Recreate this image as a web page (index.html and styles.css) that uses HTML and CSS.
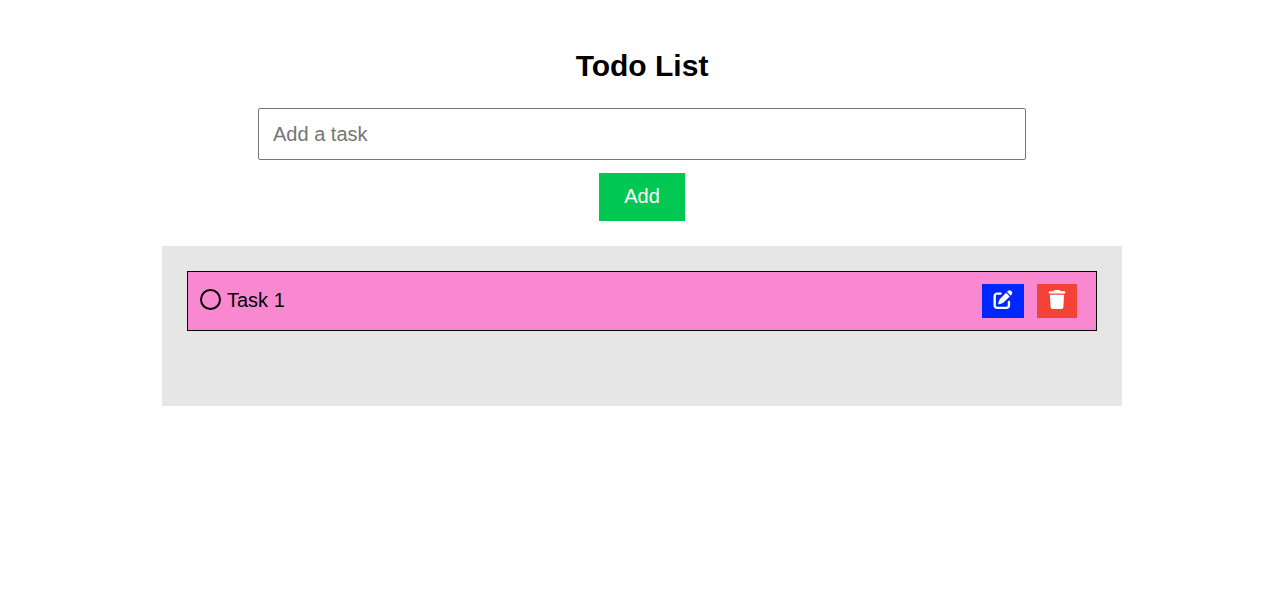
FILE: index.html
```html
<!DOCTYPE html>
<html lang="en">
<head>
<meta charset="utf-8">
<title>Todo List</title>
<meta name="viewport" content="width=device-width, initial-scale=1">
<link rel="stylesheet" href="styles.css">
</head>
<body>
<main class="todo">
  <h1 class="todo-title">Todo List</h1>
  <form class="todo-form">
    <input class="task-input" type="text" placeholder="Add a task" aria-label="Add a task">
    <button class="add-button" type="button">Add</button>
  </form>
  <ul class="task-list">
    <li class="task">
      <label class="task-label"><input class="task-check" type="checkbox"><span>Task 1</span></label>
      <div class="task-actions">
        <button class="icon-button edit" type="button" aria-label="Edit task">
          <svg class="icon" viewBox="0 0 512 512" fill="currentColor" aria-hidden="true"><path d="M471.600 21.700c-21.900-21.900-57.300-21.900-79.200 0L362.300 51.700l97.900 97.900 30.100-30.100c21.900-21.900 21.900-57.300 0-79.200L471.600 21.700zm-299.200 220c-6.100 6.100-10.800 13.600-13.500 21.900l-29.600 88.800c-2.900 8.600-.6 18.100 5.800 24.600s15.900 8.700 24.600 5.800l88.800-29.600c8.200-2.700 15.700-7.400 21.900-13.500L437.700 172.300 339.700 74.300 172.400 241.700zM96 64C43 64 0 107 0 160V416c0 53 43 96 96 96H352c53 0 96-43 96-96V320c0-17.700-14.300-32-32-32s-32 14.300-32 32v96c0 17.700-14.300 32-32 32H96c-17.700 0-32-14.300-32-32V160c0-17.700 14.300-32 32-32h96c17.700 0 32-14.300 32-32s-14.300-32-32-32H96z"/></svg>
        </button>
        <button class="icon-button delete" type="button" aria-label="Delete task">
          <svg class="icon icon-narrow" viewBox="0 0 448 512" fill="currentColor" aria-hidden="true"><path d="M135.200 17.700L128 32H32C14.300 32 0 46.300 0 64S14.300 96 32 96H416c17.700 0 32-14.300 32-32s-14.300-32-32-32H320l-7.200-14.300C307.400 6.800 296.300 0 284.200 0H163.800c-12.100 0-23.200 6.800-28.600 17.700zM416 128H32L53.200 467c1.600 25.300 22.600 45 47.900 45H346.900c25.300 0 46.300-19.700 47.900-45L416 128z"/></svg>
        </button>
      </div>
    </li>
  </ul>
</main>
</body>
</html>
```
FILE: styles.css
```css
* { box-sizing: border-box; }
body {
  margin: 0;
  padding-left: 3px;
  background: #fff;
  color: #000;
  font: 20px/24px "Liberation Sans", Arial, sans-serif;
}
.todo {
  width: 76%;
  max-width: 960px;
  margin: 0 auto;
  padding-top: 48px;
}
.todo-title {
  margin: 0 0 24px;
  font-size: 30px;
  line-height: 36px;
  text-align: center;
}
.todo-form {
  display: flex;
  flex-direction: column;
  align-items: center;
  gap: 13px;
}
.task-input {
  width: 80%;
  padding: 13px 14px;
  border: 1px solid #767676;
  border-radius: 2px;
  background: #fff;
  font: inherit;
}
.task-input::placeholder { color: #757575; }
.add-button {
  padding: 11px 25px 13px;
  border: 0;
  background: #00c853;
  color: #fff;
  font: inherit;
}
.task-list {
  min-height: 160px;
  margin: 25px 0 0;
  padding: 25px;
  background: #e6e6e6;
  list-style: none;
}
.task {
  display: flex;
  align-items: center;
  justify-content: space-between;
  padding: 12px 19px 12px 12px;
  border: 1px solid #000;
  background: #f888cf;
}
.task-label {
  display: flex;
  align-items: center;
  gap: 6px;
  padding-bottom: 3px;
}
.task-check {
  appearance: none;
  width: 21px;
  height: 21px;
  margin: 0;
  border: 2px solid #000;
  border-radius: 50%;
}
.task-check:checked { background: #000; }
.task-actions {
  display: flex;
  gap: 13px;
}
.icon-button {
  display: flex;
  padding: 6px 11px 9px;
  border: 0;
  color: #fff;
}
.edit { background: #0026ff; }
.delete { background: #f44336; }
.icon {
  width: 20px;
  height: 19px;
}
.icon-narrow { width: 18px; }
```
